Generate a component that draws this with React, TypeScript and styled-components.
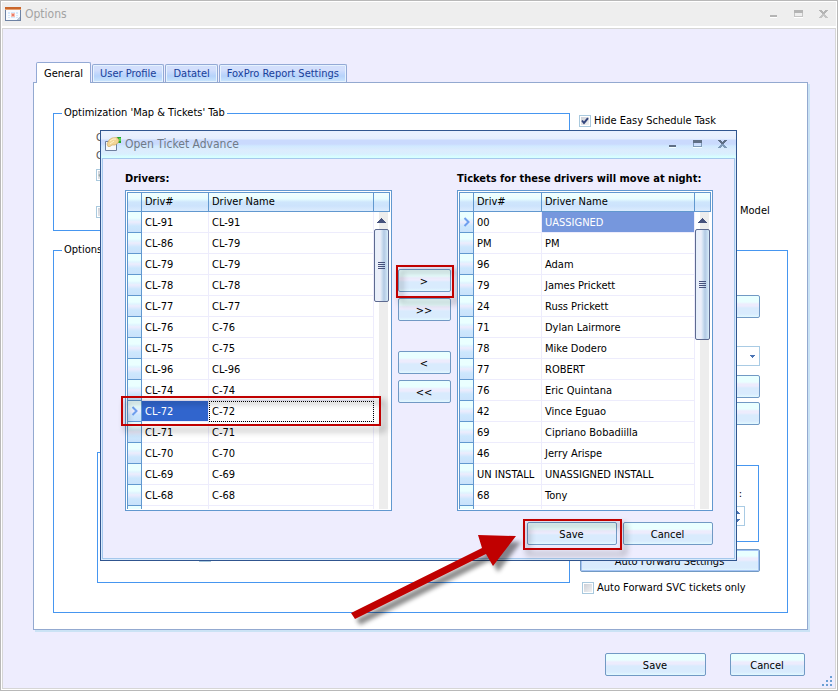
import React from "react";
import styled, { createGlobalStyle, css } from "styled-components";

const GlobalStyle = createGlobalStyle`
  * { box-sizing: border-box; }
  body {
    margin: 0;
    background: #fff;
    color: #000;
    font-family: "DejaVu Sans Condensed", "DejaVu Sans", Tahoma, sans-serif;
    font-size: 11px;
    line-height: 14px;
  }
  button, input, select { font: inherit; color: inherit; }
`;

const Page = styled.div`
  position: relative;
  min-height: 100vh;
  padding-bottom: 1px;
  display: flex;
  flex-direction: column;
`;

const Window = styled.main`
  flex: 1;
  display: flex;
  flex-direction: column;
  border: 1px solid #b8b8b8;
  padding: 1px;
  background: #fff;
`;

const WindowTitle = styled.header`
  display: flex;
  align-items: center;
  gap: 4px;
  height: 24px;
  margin-bottom: 2px;
  padding: 0 4px 0 3px;
  background: #eeeeee;
  color: #a3a3a3;
`;

const TitleText = styled.h1`
  flex: 1;
  margin: 0;
  font-size: 12px;
  line-height: 16px;
  font-weight: normal;
`;

const TitleButtons = styled.div`
  display: flex;
  gap: 9px;
`;

const TitleButton = styled.button`
  width: 16px;
  height: 16px;
  padding: 0;
  border: 0;
  background: none;
  display: flex;
  align-items: center;
  justify-content: center;
`;

const WindowBody = styled.div`
  flex: 1;
  display: flex;
  flex-direction: column;
  border: 1px solid #d6d6d6;
  background: #eeedfe;
  padding: 33px 27px 0 30px;
`;

const TabList = styled.div`
  display: flex;
  align-items: flex-end;
  gap: 1px;
  padding-left: 3px;
`;

const Tab = styled.button<{ $active?: boolean }>`
  border: 1px solid #93a9d5;
  border-bottom: 0;
  border-radius: 2px 2px 0 0;
  height: 18px;
  padding: 1px 7px 0;
  white-space: nowrap;
  color: #17409a;
  background: linear-gradient(#d3dffc 0 5px, #c9dafc 7px, #b6d3fb 11px, #cbe6fd 100%);
  box-shadow: inset 0 0 0 1px #e6f3fe;
  ${(p) =>
    p.$active &&
    css`
      height: 21px;
      margin-bottom: -1px;
      padding: 2px 7px 0;
      color: #000;
      background: #fff;
      box-shadow: none;
      z-index: 1;
    `}
`;

const TabPanel = styled.section`
  border: 1px solid #93a9d0;
  background: #fff;
  box-shadow: 2px 2px 0 #cbe3f5;
  padding: 23px 19px 16px;
`;

const TopRow = styled.div`
  display: grid;
  grid-template-columns: minmax(0, 1fr) 209px;
  column-gap: 9px;
  margin-bottom: 12px;
`;

const Group = styled.fieldset`
  min-width: 0;
  margin: 0;
  padding: 0;
  border: 1px solid #4696f0;
`;

const Legend = styled.legend`
  margin-left: 8px;
  padding: 0 2px;
`;

const MapOptions = styled.div`
  display: flex;
  flex-direction: column;
  align-items: flex-start;
  padding: 11px 0 12px 42px;
  color: #555;
`;

const Spacer = styled.div<{ $h: number }>`
  height: ${(p) => p.$h}px;
`;

const SideOptions = styled.div`
  display: flex;
  flex-direction: column;
  justify-content: space-between;
  padding: 8px 0 13px;
`;

const ModelText = styled.span`
  margin-left: 161px;
`;

const CheckLabel = styled.label`
  display: flex;
  align-items: center;
  gap: 3px;
  white-space: nowrap;
`;

const CheckBoxFrame = styled.span`
  position: relative;
  display: flex;
`;

const CheckInput = styled.input`
  appearance: none;
  margin: 0;
  width: 12px;
  height: 12px;
  border: 1px solid #a9c9de;
  background: linear-gradient(135deg, #c9ccd4, #f6f6f6);
  box-shadow: inset 0 0 0 1px #fff;
`;

const CheckMark = styled.svg`
  position: absolute;
  inset: 0;
  pointer-events: none;
`;

const OptionGrid = styled.div`
  display: grid;
  grid-template-columns: minmax(0, 1fr) 180px;
  column-gap: 10px;
  padding: 38px 27px 17px 43px;
`;

const SubGroup = styled.div`
  align-self: end;
  min-height: 131px;
  margin-bottom: 12px;
  border: 1px solid #4696f0;
  display: flex;
  align-items: flex-end;
  padding: 0 0 19px 101px;
`;

const SideControls = styled.div`
  display: flex;
  flex-direction: column;
`;

const ButtonStack = styled.div`
  display: flex;
  flex-direction: column;
  gap: 4px;
  margin: 9px 0 40px;
`;

const PushButton = styled.button<{ $w?: number }>`
  width: ${(p) => (p.$w ? p.$w + "px" : "100%")};
  height: 23px;
  padding: 2px 1px 0 0;
  border: 1px solid #7199c4;
  border-radius: 2px;
  background: linear-gradient(#e9ffff 0 6px, #edecfd 8px 10px, #d9ebfd 12px 18px, #e2f9ff 100%);
  text-align: center;
`;

const DefaultButton = styled(PushButton)`
  box-shadow: inset 0 0 0 1px #a5c4f4;
`;

const SelectFrame = styled.div`
  position: relative;
  margin-top: 28px;
`;

const Select = styled.select`
  display: block;
  appearance: none;
  width: 100%;
  height: 20px;
  border: 1px solid #a9cbe4;
  background: #fff;
`;

const SelectArrow = styled.svg`
  position: absolute;
  right: 5px;
  top: 9px;
`;

const DelayBox = styled.div`
  margin: 0 1px 7px 0;
  border: 1px solid #4696f0;
  padding: 21px 13px 14px 0;
  height: 77px;
  display: flex;
  flex-direction: column;
  align-items: flex-end;
  gap: 5px;
`;

const DelayLabel = styled.label`
  padding-right: 3px;
`;

const Spinner = styled.div`
  display: flex;
  width: 60px;
  height: 20px;
  border: 1px solid #a9cbe4;
  padding-right: 2px;
  align-items: center;
`;

const SpinnerInput = styled.input`
  flex: 1;
  min-width: 0;
  border: 0;
  padding: 0;
`;

const AutoForward = styled(DefaultButton)`
  margin-bottom: 9px;
`;

const ForwardCheck = styled.div`
  padding-left: 2px;
`;

const FooterButtons = styled.footer`
  display: flex;
  justify-content: flex-end;
  gap: 24px;
  padding: 23px 3px 0 0;
`;

const GripRow = styled.div`
  display: flex;
  justify-content: flex-end;
  margin: auto -25px 1px 0;
`;

const Overlay = styled.div`
  position: absolute;
  inset: 0;
  padding: 130px 101px 0 100px;
`;

const Dialog = styled.section`
  border: 1px solid #30558f;
  background: #d9ebfd;
`;

const DialogTitle = styled.header`
  display: flex;
  align-items: center;
  gap: 3px;
  height: 27px;
  padding: 0 5px 1px 4px;
  color: #6f7a88;
  background: linear-gradient(#e9f0fe 0 4px, #e4edfd 8px, #cadafd 9px 13px, #d0e9ff 15px, #dcecfd 19px, #d9effe 23px, #d7ffff 26px, #d7ffff 27px);
`;

const DialogBody = styled.div`
  margin: 0 1px 1px;
  border: 1px solid #a5c8ec;
  background: #eeedfe;
  padding: 13px 21px 13px 22px;
`;

const Lists = styled.div`
  display: grid;
  grid-template-columns: minmax(0, 267fr) 53px minmax(0, 256fr);
  column-gap: 6px;
`;

const ListColumn = styled.div`
  display: flex;
  flex-direction: column;
`;

const ListTitle = styled.h2`
  margin: 0 0 4px;
  font-size: 11px;
  line-height: 14px;
  white-space: nowrap;
`;

const GridFrame = styled.div`
  position: relative;
  border: 1px solid #6198cf;
  background: #fff;
  padding: 1px;
`;

const GridLayout = styled.div`
  display: grid;
  grid-template-columns: minmax(0, 1fr) 16px;
  height: 317px;
  overflow: hidden;
`;

const DataTable = styled.table`
  width: 100%;
  table-layout: fixed;
  border-collapse: separate;
  border-spacing: 0;
  align-self: start;
`;

const headerFill = "linear-gradient(#f2ffff 0, #e6fdff 6px, #cfe6fc 9px, #cde3fc 13px, #dcecfe 100%)";

const HeadCell = styled.th<{ $w?: number }>`
  ${(p) => p.$w && `width: ${p.$w}px;`}
  height: 20px;
  padding: 0 0 0 3px;
  border: solid #6198cf;
  border-width: 1px 1px 1px 0;
  &:first-child { border-left-width: 1px; padding: 0; }
  background: ${headerFill};
  font-weight: normal;
  text-align: left;
`;

const Marker = styled.td`
  height: 21px;
  padding: 0 0 0 3px;
  border: solid #6198cf;
  border-width: 0 1px 1px;
  background: linear-gradient(#eaffff 0 6px, #dff4ff 8px, #edecfd 10px, #cde7fd 14px, #c9e2fb 100%);
`;

const Cell = styled.td<{ $tone?: string }>`
  height: 21px;
  padding: 1px 0 0 3px;
  border: solid #edecfc;
  border-width: 0 1px 1px 0;
  white-space: nowrap;
  overflow: hidden;
  ${(p) => p.$tone === "dark" && "background: #3165cd; color: #fff;"}
  ${(p) => p.$tone === "soft" && "background: #7697dd; color: #fff;"}
  ${(p) => p.$tone === "focus" && "outline: 1px dotted #000; outline-offset: -1px;"}
`;

const ScrollColumn = styled.div`
  display: flex;
  flex-direction: column;
  align-items: flex-start;
  background: linear-gradient(90deg, #fff 0 5px, #ededed 5px 14px, #fff 14px);
`;

const ScrollHead = styled.div`
  align-self: stretch;
  height: 20px;
  border: solid #6198cf;
  border-width: 1px 1px 1px 0;
  background: ${headerFill};
`;

const ScrollButton = styled.button`
  width: 15px;
  height: 17px;
  padding: 0;
  border: 0;
  background: none;
  display: flex;
  align-items: center;
  justify-content: center;
`;

const Thumb = styled.div<{ $h: number }>`
  width: 15px;
  height: ${(p) => p.$h}px;
  margin-bottom: auto;
  border: 1px solid #5d6a90;
  border-radius: 2px;
  background: linear-gradient(90deg, #e6effa 0, #edeffa 5px, #cfe0f1 7px, #b3cae4 9px, #cde2f4 12px, #def3fc 100%);
  display: flex;
  align-items: center;
  justify-content: center;
`;

const MoveButtons = styled.div`
  display: flex;
  flex-direction: column;
  gap: 30px;
  padding-top: 97px;
`;

const MovePair = styled.div`
  display: flex;
  flex-direction: column;
  gap: 6px;
`;

const DialogActions = styled.div`
  display: flex;
  justify-content: flex-end;
  gap: 6px;
  margin-top: 11px;
`;

const Marked = styled.div`
  position: relative;
`;

const Highlight = styled.div<{ $inset: string }>`
  position: absolute;
  inset: ${(p) => p.$inset};
  border: 2px solid #c00000;
  filter: drop-shadow(4px 5px 3px rgba(0, 0, 0, 0.45));
  pointer-events: none;
`;

const Arrow = styled.svg`
  position: absolute;
  top: 8px;
  right: 90px;
  overflow: visible;
  filter: drop-shadow(5px 6px 2px rgba(0, 0, 0, 0.45));
  pointer-events: none;
`;

const CurrentMark = styled.svg`
  display: block;
`;

const CheckBox = ({ checked, label, dim }: { checked?: boolean; label?: string; dim?: boolean }) => (
  <CheckLabel>
    <CheckBoxFrame>
      <CheckInput type="checkbox" defaultChecked={checked} disabled={dim} aria-label={label || "Option"} />
      {checked && (
        <CheckMark width="12" height="12" viewBox="0 0 12 12">
          <path d="M3 5.5 L5 8 L9 3.2" fill="none" stroke={dim ? "#9aa" : "#33457c"} strokeWidth="2" />
        </CheckMark>
      )}
    </CheckBoxFrame>
    {label}
  </CheckLabel>
);

const WindowControls = ({ top, bottom, glow }: { top: string; bottom: string; glow: string }) => (
  <TitleButtons>
    <TitleButton aria-label="Minimize">
      <svg width="16" height="16" shapeRendering="crispEdges">
        <path d="M4 9h7v2H4z" fill={top} />
        <path d="M4 11h7v1H4z" fill={glow} />
      </svg>
    </TitleButton>
    <TitleButton aria-label="Maximize">
      <svg width="16" height="16" shapeRendering="crispEdges">
        <path d="M3 4h9v3H3z" fill={top} />
        <path d="M3 7h9v4H3z M4 7v3h7V7z" fill={bottom} fillRule="evenodd" />
        <path d="M3 11h9v1H3z" fill={glow} />
      </svg>
    </TitleButton>
    <TitleButton aria-label="Close">
      <svg width="16" height="16" shapeRendering="crispEdges">
        <path d="M3 4h3v1h1v1h1v-1h1v-1h3v1h-1v1h-1v1h-1v1h-3v-1h-1v-1h-1v-1h-1z" fill={top} />
        <path d="M6 8h3v1h1v1h1v1h1v1h-3v-1h-1v-1h-1v1h-1v1h-3v-1h1v-1h1v-1h1z" fill={bottom} />
      </svg>
    </TitleButton>
  </TitleButtons>
);

const OptionsIcon = () => (
  <svg width="16" height="16" shapeRendering="crispEdges" aria-hidden="true">
    <path d="M0 1h16v14H0z" fill="#6d82a3" />
    <path d="M1 4h14v10H1z" fill="#f8fbff" />
    <path d="M0 1h16v2H0z" fill="#c9662b" />
    <path d="M0 3h16v1H0z" fill="#e6a070" />
    <path d="M3 6h10v6H3z" fill="#d5e8fa" />
    <path d="M3 8h10v1H3zM3 10h10v1H3zM5 6h1v6H5zM10 6h1v6h-1z" fill="#f8fbff" />
    <path d="M6 7h4v4H6z" fill="#f6bfb2" />
    <path d="M7 8h2v2H7z" fill="#ec7c67" />
    <path d="M12 13h1v-1h1v-1h1v3h-3z" fill="#b9c4d4" />
  </svg>
);

const TicketIcon = () => (
  <svg width="17" height="16" aria-hidden="true">
    <path d="M.5 5.500h11v9h-11z" fill="#f7f9fd" stroke="#6c7f9e" />
    <path d="M12 1h4v6h-3l-2-3z" fill="#1fa52c" />
    <path d="M14 2h2v3h-2z" fill="#57d44f" />
    <path d="M2 8 4 4 7 2l5-.5 2 2.500-1 3-3 2-3 0-2 1.500-2 0z" fill="#f2d596" stroke="#d3ad65" strokeWidth=".7" />
    <path d="M5 5l3-2 3 0M5 8l4-3" stroke="#fff3cc" fill="none" />
  </svg>
);

const RowArrow = () => (
  <CurrentMark width="8" height="10" aria-label="Current row">
    <path d="M1.500 1 5.500 5l-4 4" fill="none" stroke="#6f9fee" strokeWidth="2" />
  </CurrentMark>
);

const Triangle = ({ up }: { up?: boolean }) => (
  <svg width="9" height="5" shapeRendering="crispEdges">
    <path d={up ? "M4 0h1v1h1v1h1v1h1v1h1v1H0V4h1V3h1V2h1V1h1z" : "M0 0h9v1H8v1H7v1H6v1H5v1H4V4H3V3H2V2H1V1H0z"} fill="#46527c" />
  </svg>
);

type Row = [string, string];

const drivers: Row[] = [
  ["CL-91", "CL-91"], ["CL-86", "CL-79"], ["CL-79", "CL-79"], ["CL-78", "CL-78"], ["CL-77", "CL-77"],
  ["CL-76", "C-76"], ["CL-75", "C-75"], ["CL-96", "CL-96"], ["CL-74", "C-74"], ["CL-72", "C-72"],
  ["CL-71", "C-71"], ["CL-70", "C-70"], ["CL-69", "C-69"], ["CL-68", "C-68"],
];

const movers: Row[] = [
  ["00", "UASSIGNED"], ["PM", "PM"], ["96", "Adam"], ["79", "James Prickett"], ["24", "Russ Prickett"],
  ["71", "Dylan Lairmore"], ["78", "Mike Dodero"], ["77", "ROBERT"], ["76", "Eric Quintana"],
  ["42", "Vince Eguao"], ["69", "Cipriano Bobadiilla"], ["46", "Jerry Arispe"],
  ["UN INSTALL", "UNASSIGNED INSTALL"], ["68", "Tony"],
];

interface DriverGridProps {
  rows: Row[];
  current: number;
  tones: [string, string];
  codeWidth: number;
  thumb: number;
  children?: React.ReactNode;
}

const DriverGrid = ({ rows, current, tones, codeWidth, thumb, children }: DriverGridProps) => (
  <GridFrame>
    <GridLayout>
      <DataTable>
        <thead>
          <tr>
            <HeadCell $w={15} aria-label="Current" />
            <HeadCell $w={codeWidth}>Driv#</HeadCell>
            <HeadCell>Driver Name</HeadCell>
          </tr>
        </thead>
        <tbody>
          {rows.map(([code, name], i) => (
            <tr key={code}>
              <Marker>{i === current && <RowArrow />}</Marker>
              <Cell $tone={i === current ? tones[0] : ""}>{code}</Cell>
              <Cell $tone={i === current ? tones[1] : ""}>{name}</Cell>
            </tr>
          ))}
          <tr>
            <Marker />
            <Cell />
            <Cell />
          </tr>
        </tbody>
      </DataTable>
      <ScrollColumn>
        <ScrollHead />
        <ScrollButton aria-label="Scroll up"><Triangle up /></ScrollButton>
        <Thumb $h={thumb}>
          <svg width="7" height="8" shapeRendering="crispEdges">
            <path d="M0 0h7v1H0zM0 2h7v1H0zM0 4h7v1H0zM0 6h7v1H0z" fill="#46527c" />
          </svg>
        </Thumb>
        <ScrollButton aria-label="Scroll down"><Triangle /></ScrollButton>
      </ScrollColumn>
    </GridLayout>
    {children}
  </GridFrame>
);

const AdvanceDialog = () => (
  <Overlay>
    <Dialog role="dialog" aria-label="Open Ticket Advance">
      <DialogTitle>
        <TicketIcon />
        <TitleText as="h2">Open Ticket Advance</TitleText>
        <WindowControls top="#5f6f86" bottom="#7f9ab8" glow="#f4ffff" />
      </DialogTitle>
      <DialogBody>
        <Lists>
          <ListColumn>
            <ListTitle>Drivers:</ListTitle>
            <DriverGrid rows={drivers} current={9} tones={["dark", "focus"]} codeWidth={67} thumb={73}>
              <Highlight $inset="205px 10px 84px -5px" />
            </DriverGrid>
          </ListColumn>
          <MoveButtons>
            <MovePair>
              <Marked>
                <PushButton>&gt;</PushButton>
                <Highlight $inset="-4px -3px -6px -2px" />
              </Marked>
              <PushButton>&gt;&gt;</PushButton>
            </MovePair>
            <MovePair>
              <PushButton>&lt;</PushButton>
              <PushButton>&lt;&lt;</PushButton>
            </MovePair>
          </MoveButtons>
          <ListColumn>
            <ListTitle>Tickets for these drivers will move at night:</ListTitle>
            <DriverGrid rows={movers} current={0} tones={["", "soft"]} codeWidth={68} thumb={111} />
          </ListColumn>
        </Lists>
        <DialogActions>
          <Marked>
            <PushButton $w={90}>Save</PushButton>
            <Highlight $inset="-3px -5px -5px -4px" />
            <Arrow width="182" height="100" viewBox="345 530 182 100">
              <path d="M516 536 493 566 486 554 355 619 351 613 482 548 478 535z" fill="#c00000" />
            </Arrow>
          </Marked>
          <PushButton $w={90}>Cancel</PushButton>
        </DialogActions>
      </DialogBody>
    </Dialog>
  </Overlay>
);

export default function App() {
  return (
    <Page>
      <GlobalStyle />
      <Window>
        <WindowTitle>
          <OptionsIcon />
          <TitleText>Options</TitleText>
          <WindowControls top="#b4b4b4" bottom="#c4c4c4" glow="#ffffff" />
        </WindowTitle>
        <WindowBody>
          <TabList role="tablist">
            <Tab role="tab" aria-selected $active>General</Tab>
            <Tab role="tab">User Profile</Tab>
            <Tab role="tab">Datatel</Tab>
            <Tab role="tab">FoxPro Report Settings</Tab>
          </TabList>
          <TabPanel>
            <TopRow>
              <Group>
                <Legend>Optimization 'Map &amp; Tickets' Tab</Legend>
                <MapOptions>
                  <span>C</span>
                  <Spacer $h={4} />
                  <span>C</span>
                  <Spacer $h={6} />
                  <CheckBox checked dim />
                  <Spacer $h={25} />
                  <CheckBox dim />
                </MapOptions>
              </Group>
              <SideOptions>
                <CheckBox checked label="Hide Easy Schedule Task" />
                <ModelText>Model</ModelText>
              </SideOptions>
            </TopRow>
            <Group>
              <Legend>Options</Legend>
              <OptionGrid>
                <SubGroup>
                  <CheckBox label="Enable merging" />
                </SubGroup>
                <SideControls>
                  <PushButton aria-label="Edit" />
                  <SelectFrame>
                    <Select aria-label="Choice" />
                    <SelectArrow width="5" height="3" shapeRendering="crispEdges">
                      <path d="M0 0h5v1H4v1H3v1H2V2H1V1H0z" fill="#4a74b4" />
                    </SelectArrow>
                  </SelectFrame>
                  <ButtonStack>
                    <PushButton aria-label="Edit first" />
                    <PushButton aria-label="Edit second" />
                  </ButtonStack>
                  <DelayBox>
                    <DelayLabel htmlFor="delay">:</DelayLabel>
                    <Spinner>
                      <SpinnerInput id="delay" type="text" />
                      <svg width="9" height="14" shapeRendering="crispEdges">
                        <path d="M4 2h1v1h1v1h1v1H2V4h1V3h1zM2 10h5v1H6v1H5v1H4v-1H3v-1H2z" fill="#4a74b4" />
                      </svg>
                    </Spinner>
                  </DelayBox>
                  <AutoForward>Auto Forward Settings</AutoForward>
                  <ForwardCheck>
                    <CheckBox label="Auto Forward SVC tickets only" />
                  </ForwardCheck>
                </SideControls>
              </OptionGrid>
            </Group>
          </TabPanel>
          <FooterButtons>
            <PushButton $w={101}>Save</PushButton>
            <PushButton $w={75}>Cancel</PushButton>
          </FooterButtons>
          <GripRow>
            <svg width="11" height="11" shapeRendering="crispEdges" aria-hidden="true">
              <path d="M8 0h2v2H8zM4 4h2v2H4zM8 4h2v2H8zM0 8h2v2H0zM4 8h2v2H4zM8 8h2v2H8z" fill="#6b9fd4" />
            </svg>
          </GripRow>
        </WindowBody>
      </Window>
      <AdvanceDialog />
    </Page>
  );
}
